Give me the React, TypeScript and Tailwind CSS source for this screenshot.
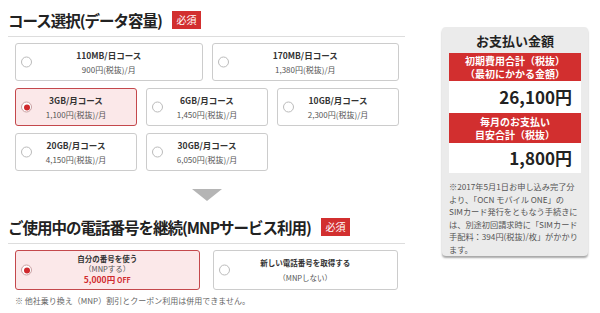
import React from "react";

const font = { fontFamily: '"Noto Sans CJK JP", "Noto Sans", sans-serif' };

function Radio({ checked }: { checked?: boolean }) {
  return (
    <span
      className={`absolute left-[5px] top-1/2 -translate-y-1/2 w-[11px] h-[11px] rounded-full border bg-white flex items-center justify-center ${
        checked ? "border-[#c9a0a2]" : "border-[#bbbbbb]"
      }`}
    >
      {checked && <span className="w-[6px] h-[6px] rounded-full bg-[#d0292d]" />}
    </span>
  );
}

function Card({ title, sub, checked }: { title: string; sub: string; checked?: boolean }) {
  return (
    <div
      className={`relative h-[38px] rounded-[3px] flex flex-col items-center justify-center ${
        checked ? "border-[1.5px] border-[#c4484c] bg-[#fbe8e9]" : "border border-[#cccccc] bg-white"
      }`}
    >
      <Radio checked={checked} />
      <div className="text-[8.5px] leading-[12px] font-bold text-[#333]">{title}</div>
      <div className="text-[8px] leading-[12px] mt-[3px] text-[#555]">{sub}</div>
    </div>
  );
}

function Badge() {
  return (
    <span className="inline-flex items-center justify-center w-[29px] h-[18px] bg-[#d22f2f] text-white text-[10px] leading-none ml-[10px]">
      必須
    </span>
  );
}

const noteLines = [
  "※2017年5月1日お申し込み完了分",
  "より、「OCN モバイル ONE」の",
  "SIMカード発行をともなう手続きに",
  "は、別途初回請求時に「SIMカード",
  "手配料：394円(税抜)/枚」がかかり",
  "ます。",
];

export default function App() {
  return (
    <div className="w-[600px] h-[313px] bg-white flex pl-[8px] overflow-hidden" style={font}>
      <div className="w-[397px] flex flex-col">
        <div className="flex items-center pt-[8px] pb-[4px] border-b border-[#dddddd]">
          <span className="text-[15.5px] tracking-[-1px] leading-[24px] font-bold text-[#222] whitespace-nowrap">
            コース選択(データ容量)
          </span>
          <Badge />
        </div>
        <div className="pl-[7px] pr-[6px] pt-[6px] flex flex-col gap-[7px]">
          <div className="grid grid-cols-2 gap-[9px]">
            <Card title="110MB/日コース" sub="900円(税抜)/月" />
            <Card title="170MB/日コース" sub="1,380円(税抜)/月" />
          </div>
          <div className="grid grid-cols-3 gap-[9px]">
            <Card title="3GB/月コース" sub="1,100円(税抜)/月" checked />
            <Card title="6GB/月コース" sub="1,450円(税抜)/月" />
            <Card title="10GB/月コース" sub="2,300円(税抜)/月" />
          </div>
          <div className="grid grid-cols-3 gap-[9px]">
            <Card title="20GB/月コース" sub="4,150円(税抜)/月" />
            <Card title="30GB/月コース" sub="6,050円(税抜)/月" />
          </div>
        </div>
        <div className="flex justify-center pt-[18px] pl-[1px]">
          <div className="w-0 h-0 border-l-[15px] border-r-[15px] border-t-[12px] border-l-transparent border-r-transparent border-t-[#b5b5b5]" />
        </div>
        <div className="flex items-center pt-[14px] pb-[4px] border-b border-[#dddddd]">
          <span className="text-[15.5px] tracking-[-1px] leading-[24px] font-bold text-[#222] whitespace-nowrap">
            ご使用中の電話番号を継続(MNPサービス利用)
          </span>
          <Badge />
        </div>
        <div className="px-[7px] pt-[6px] flex gap-[13px]">
          <div className="relative w-[185px] h-[40px] rounded-[3px] border-[1.5px] border-[#c4484c] bg-[#fbe8e9] flex flex-col items-center justify-center">
            <Radio checked />
            <div className="text-[7.5px] leading-[10px] font-bold text-[#333]">自分の番号を使う</div>
            <div className="text-[7.5px] leading-[10px] text-[#555]">（MNPする）</div>
            <div className="text-[8.5px] leading-[11px] font-bold text-[#d0292d]">
              5,000円 <span className="text-[7px]">OFF</span>
            </div>
          </div>
          <div className="relative w-[186px] h-[40px] rounded-[3px] border border-[#cccccc] bg-white flex flex-col items-center justify-center">
            <Radio />
            <div className="text-[7.5px] leading-[10px] font-bold text-[#333]">新しい電話番号を取得する</div>
            <div className="text-[7.5px] leading-[10px] mt-[5px] text-[#555]">（MNPしない）</div>
          </div>
        </div>
        <div className="pl-[7px] pt-[5px] text-[8px] leading-[12px] text-[#666]">
          ※ 他社乗り換え（MNP）割引とクーポン利用は併用できません。
        </div>
      </div>
      <div className="ml-[37px] mt-[27px] w-[146px] h-[229px] bg-[#ebebeb] rounded-[4px] shadow-[0_2px_2px_rgba(0,0,0,0.35)] px-[7px] pt-[4px]">
        <div className="text-center text-[13px] leading-[20px] font-bold text-[#222] mb-[2px]">お支払い金額</div>
        <div className="h-[28px] bg-[#d22f2f] text-white text-[10px] leading-[13px] font-bold flex flex-col items-center justify-center">
          <div>初期費用合計（税抜）</div>
          <div>（最初にかかる金額）</div>
        </div>
        <div className="h-[32px] bg-white flex items-center justify-end pr-[9px] text-[17px] font-bold text-[#222]">
          26,100円
        </div>
        <div className="h-[30px] bg-[#d22f2f] text-white text-[10px] leading-[13px] font-bold flex flex-col items-center justify-center">
          <div>毎月のお支払い</div>
          <div>目安合計（税抜）</div>
        </div>
        <div className="h-[30px] bg-white flex items-center justify-end pr-[9px] text-[17px] font-bold text-[#222]">
          1,800円
        </div>
        <div className="pt-[7px] text-[8.2px] leading-[12.6px] text-[#555] whitespace-nowrap">
          {noteLines.map((l) => (
            <div key={l}>{l}</div>
          ))}
        </div>
      </div>
    </div>
  );
}
